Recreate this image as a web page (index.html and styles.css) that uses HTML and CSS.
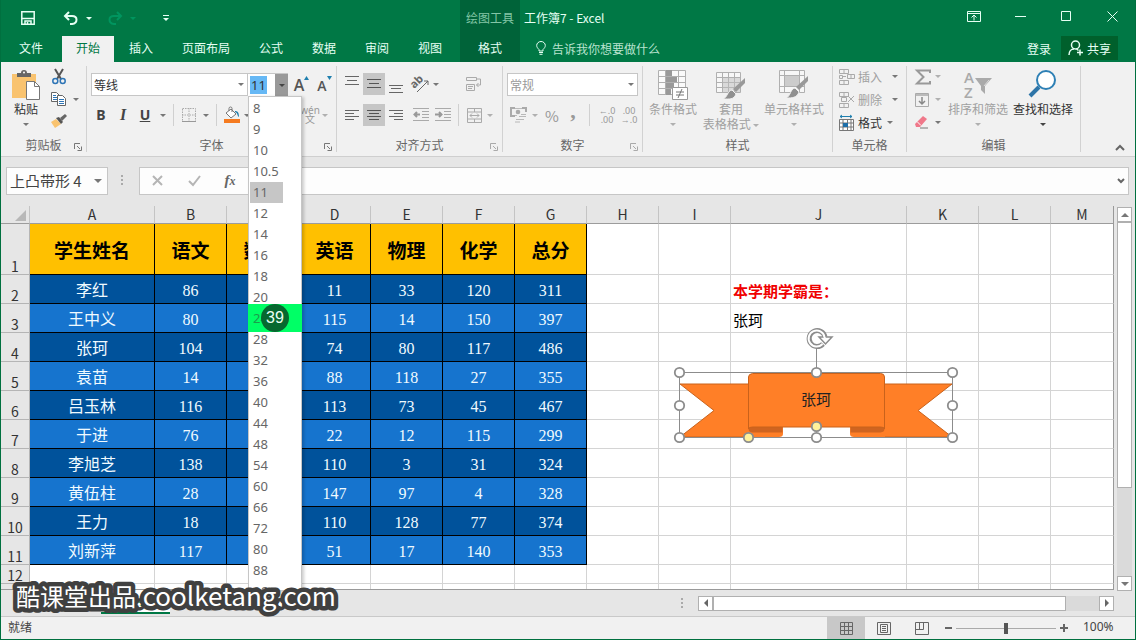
FILE: index.html
```html
<!DOCTYPE html>
<html lang="zh-CN">
<head>
<meta charset="utf-8">
<title>工作簿7 - Excel</title>
<link rel="stylesheet" href="styles.css">
</head>
<body>
<div class="app">
  <header class="titlebar">
    <div class="title-left">
      <div class="qat">
        <button class="qbtn" aria-label="保存"><svg width="14" height="14" viewBox="0 0 14 14"><path d="M.8.8h12.400v12.400H.8zM1 7.500h12M4 13v-3h6v3M6.500 11v2" fill="none" stroke="#e6fff4" stroke-width="1.500"/></svg></button>
        <button class="qbtn" aria-label="撤消"><svg width="16" height="14" viewBox="0 0 16 14"><path d="M6 1L2 5l4 4M2 5h7c6 0 6 7 0 8H7" fill="none" stroke="#e6fff4" stroke-width="2"/></svg></button>
        <button class="qcaret" aria-label="撤消选项"><i class="caret light"></i></button>
        <button class="qbtn" aria-label="恢复"><svg width="16" height="14" viewBox="0 0 16 14"><path d="M10 1l4 4-4 4M14 5H7c-6 0-6 7 0 8h2" fill="none" stroke="#00955f" stroke-width="2"/></svg></button>
        <button class="qcaret" aria-label="恢复选项"><i class="caret dim"></i></button>
        <button class="qbtn" aria-label="自定义快速访问工具栏"><svg width="6" height="7" viewBox="0 0 6 7"><path d="M0 .5h6" stroke="#e6fff4"/><path d="M0 3h6L3 6z" fill="#e6fff4"/></svg></button>
      </div>
      <nav class="tabs">
        <button class="tab file">文件</button><button class="tab active">开始</button><button class="tab">插入</button><button class="tab">页面布局</button><button class="tab">公式</button><button class="tab">数据</button><button class="tab">审阅</button><button class="tab">视图</button>
      </nav>
    </div>
    <div class="context">
      <span class="context-name">绘图工具</span>
      <button class="tab">格式</button>
    </div>
    <div class="title-right">
      <div class="caption">
        <span class="doc">工作簿7 - Excel</span>
        <button class="wbtn" aria-label="功能区显示选项"><svg width="14" height="11" viewBox="0 0 14 11"><path d="M.5.500h13v10H.5zM.5 2.500h13M7 9.500V4.500M4.500 6.500L7 4l2.500 2.500" fill="none" stroke="#e6fff4"/></svg></button>
        <button class="wbtn" aria-label="最小化"><svg width="11" height="11" viewBox="0 0 11 11"><path d="M0 5.500h11" stroke="#e6fff4"/></svg></button>
        <button class="wbtn" aria-label="最大化"><svg width="11" height="11" viewBox="0 0 11 11"><path d="M.5.500h9v9h-9z" fill="none" stroke="#e6fff4"/></svg></button>
        <button class="wbtn" aria-label="关闭"><svg width="11" height="11" viewBox="0 0 11 11"><path d="M.5.500l10 10M10.500.500l-10 10" stroke="#e6fff4"/></svg></button>
      </div>
      <div class="tellrow">
        <svg width="10" height="14" viewBox="0 0 10 14"><path d="M3 10V8.500C1.500 7 .7 6 .7 4.500a4.300 4 0 0 1 8.600 0C9.300 6 8.500 7 7 8.500V10zM3 11.500h4M3.500 13.300h3" fill="none" stroke="#e6fff4"/></svg>
        <a class="tell" href="#">告诉我你想要做什么</a>
        <a class="login" href="#">登录</a>
        <button class="share"><svg width="16" height="16" viewBox="0 0 16 16"><circle cx="7.500" cy="5" r="4" fill="none" stroke="#e6fff4" stroke-width="1.500"/><path d="M1 15c0-3.500 2-6 5-6M8.500 9l2 1.500M9 12.500h6M12 9.500v6" fill="none" stroke="#e6fff4" stroke-width="1.500"/></svg>共享</button>
      </div>
    </div>
  </header>

  <section class="ribbon">
    <div class="group clip">
      <div class="body">
        <button class="big"><svg width="28" height="30" viewBox="0 0 28 30"><path d="M0 4h24v24H0z" fill="#f9c36f"/><path d="M5 7V3h4a3 3 0 0 1 6 0h4v4z" fill="#666"/><circle cx="12" cy="2.500" r="1" fill="#fff"/><path d="M14.500 11.500h8l5 5v13h-13z" fill="#fff" stroke="#777"/><path d="M22.500 11.500v5h5" fill="none" stroke="#777"/></svg><span>粘贴</span><i class="caret"></i></button>
        <div class="stack">
          <button class="ib" aria-label="剪切"><svg width="14" height="16" viewBox="0 0 14 16"><path d="M3 0l6 10M11 0L5 10" stroke="#555" stroke-width="2"/><circle cx="3.300" cy="12" r="2.500" fill="none" stroke="#2e75b6" stroke-width="1.500"/><circle cx="10.700" cy="12" r="2.500" fill="none" stroke="#2e75b6" stroke-width="1.500"/></svg></button>
          <button class="ib wide" aria-label="复制"><svg width="16" height="14" viewBox="0 0 16 14"><path d="M.5.500h5l3 3v6h-8z" fill="#fff" stroke="#666"/><path d="M2 3.500h3M2 5.500h4M2 7.500h4" stroke="#2e75b6"/><path d="M6.500 3.500h5l3 3v7h-8z" fill="#fff" stroke="#666"/><path d="M8 7.500h5M8 9.500h5M8 11.500h5" stroke="#2e75b6"/></svg><i class="caret"></i></button>
          <button class="ib" aria-label="格式刷"><svg width="16" height="14" viewBox="0 0 16 14"><path d="M0 8l5-3 5 5-6 4z" fill="#f9c36f"/><path d="M5 4l3-1 4 5-2 2z" fill="#555"/><path d="M9 4l5-4 2 2-5 5z" fill="#666"/></svg></button>
        </div>
      </div>
      <div class="glabel">剪贴板<svg class="launch" width="8" height="8" viewBox="0 0 8 8"><path d="M.5 6V.500H6M3 3l3 3M7.500 3.500v4h-4" fill="none" stroke="#777"/></svg></div>
    </div>

    <div class="group font">
      <div class="body rows">
        <div class="row1">
          <select class="sel fname" aria-label="字体"><option>等线</option></select>
          <div class="combo">
            <input class="fsize" value="11" aria-label="字号">
            <button class="fdrop" aria-label="打开字号列表"><i class="caret dark"></i></button>
            <ul class="sizes">
              <li>8</li><li>9</li><li>10</li><li>10.5</li><li class="cur"><span>11</span></li><li>12</li><li>14</li><li>16</li><li>18</li><li>20</li><li class="hot">24<b class="count">39</b></li><li>28</li><li>32</li><li>36</li><li>40</li><li>44</li><li>48</li><li>54</li><li>60</li><li>66</li><li>72</li><li>80</li><li>88</li><li>96</li>
            </ul>
          </div>
          <button class="ib grow" aria-label="增大字号">A<svg width="5" height="4" viewBox="0 0 5 4"><path d="M0 4l2.500-4L5 4z" fill="#1f7fae"/></svg></button>
          <button class="ib grow small" aria-label="减小字号">A<svg width="5" height="4" viewBox="0 0 5 4"><path d="M0 0h5L2.500 4z" fill="#1f7fae"/></svg></button>
        </div>
        <div class="row2">
          <button class="ib bold">B</button><button class="ib ital">I</button><button class="ib und">U</button><button class="ib" aria-label="下划线选项"><i class="caret"></i></button>
          <span class="vsep"></span>
          <button class="ib" aria-label="边框"><svg width="14" height="14" viewBox="0 0 14 14"><path d="M.5.500h13v13H.5zM7 0v14M0 7h14" fill="none" stroke="#aaa" stroke-dasharray="1.500 1"/><path d="M0 13.500h14" stroke="#999"/></svg></button><button class="ib" aria-label="边框选项"><i class="caret"></i></button>
          <span class="vsep"></span>
          <button class="ib" aria-label="填充颜色"><svg width="18" height="16" viewBox="0 0 18 16"><path d="M3 6l5-4 5 5-5 4zM6 4V1.500a1.500 1.500 0 0 1 3 0V5" fill="#fff" stroke="#777"/><path d="M12 4c3 0 4 2 4 6-2-1-1-4-4-5z" fill="#1f7fae"/><path d="M1 12h16v4H1z" fill="#f57b20"/></svg></button>
          <button class="ib" aria-label="填充选项"><i class="caret"></i></button>
          <button class="ib wen"><span>wén</span><span>文</span></button><button class="ib wencaret" aria-label="拼音选项"><i class="caret pale"></i></button>
        </div>
      </div>
      <div class="glabel">字体<svg class="launch" width="8" height="8" viewBox="0 0 8 8"><path d="M.5 6V.500H6M3 3l3 3M7.500 3.500v4h-4" fill="none" stroke="#777"/></svg></div>
    </div>

    <div class="group align">
      <div class="body rows">
        <div class="arow">
          <button class="ib" aria-label="顶端对齐"><svg width="14" height="22" viewBox="0 0 14 22"><path d="M0 3.500h14M2 7.500h10M0 11.500h14" stroke="#666"/></svg></button>
          <button class="ib on" aria-label="垂直居中"><svg width="14" height="22" viewBox="0 0 14 22"><path d="M0 6.500h14M2 10.500h10M0 14.500h14" stroke="#555"/></svg></button>
          <button class="ib" aria-label="底端对齐"><svg width="14" height="22" viewBox="0 0 14 22"><path d="M0 12.500h14M2 15.500h10M0 19.500h14" stroke="#666"/></svg></button>
          <button class="ib" aria-label="方向"><svg width="20" height="22" viewBox="0 0 20 22"><text x="3" y="15" transform="rotate(-45 5 14)" class="ab">ab</text><path d="M7 19L18 8M14 8h4v4" fill="none" stroke="#666"/></svg></button>
          <button class="ib" aria-label="方向选项"><i class="caret"></i></button><span></span>
          <button class="ib" aria-label="自动换行"><svg width="16" height="16" viewBox="0 0 16 16"><path d="M.5 1.500h10v3H.5zM.5 8.500h8v6h-8zM2 10.500h5M2 12.500h4M10.500 3h4v6h-4M12.500 7l-2 2 2 2" fill="none" stroke="#aaa"/></svg></button>
        </div>
        <div class="arow">
          <button class="ib" aria-label="左对齐"><svg width="14" height="12" viewBox="0 0 14 12"><path d="M0 1.500h14M0 4.500h9M0 7.500h14M0 10.500h9" stroke="#666"/></svg></button>
          <button class="ib on" aria-label="居中"><svg width="14" height="12" viewBox="0 0 14 12"><path d="M0 1.500h14M2 4.500h10M0 7.500h14M2 10.500h10" stroke="#555"/></svg></button>
          <button class="ib" aria-label="右对齐"><svg width="14" height="12" viewBox="0 0 14 12"><path d="M0 1.500h14M5 4.500h9M0 7.500h14M5 10.500h9" stroke="#666"/></svg></button>
          <button class="ib" aria-label="减少缩进"><svg width="16" height="14" viewBox="0 0 16 14"><path d="M0 .5h16M9 3.500h7M9 6.500h7M9 9.500h7M0 12.500h16" stroke="#aaa"/><path d="M7 6.500H2M4 4L1.500 6.500 4 9" fill="none" stroke="#999" stroke-width="2"/></svg></button>
          <button class="ib" aria-label="增加缩进"><svg width="16" height="14" viewBox="0 0 16 14"><path d="M0 .5h16M9 3.500h7M9 6.500h7M9 9.500h7M0 12.500h16" stroke="#aaa"/><path d="M0 6.500h5M4 4l2.500 2.500L4 9" fill="none" stroke="#999" stroke-width="2"/></svg></button>
          <span class="vsep"></span>
          <button class="ib" aria-label="合并后居中"><svg width="15" height="15" viewBox="0 0 15 15"><path d="M.5.500h14v14H.5zM.5 4h14M.5 11h14M7.500 0v4M7.500 11v4M3 7.500h9M5 5.500l-2 2 2 2M10 5.500l2 2-2 2" fill="none" stroke="#aaa"/></svg></button>
          <button class="ib" aria-label="合并选项"><i class="caret pale"></i></button>
        </div>
      </div>
      <div class="glabel">对齐方式<svg class="launch" width="8" height="8" viewBox="0 0 8 8"><path d="M.5 6V.500H6M3 3l3 3M7.500 3.500v4h-4" fill="none" stroke="#aaa"/></svg></div>
    </div>

    <div class="group num">
      <div class="body rows">
        <select class="sel fmt" aria-label="数字格式"><option>常规</option></select>
        <div class="nrow">
          <button class="ib" aria-label="会计格式"><svg width="17" height="16" viewBox="0 0 17 16"><path d="M1 5V1h4M12 1h4v4M1 5v4h4" fill="none" stroke="#aaa" stroke-width="2"/><path d="M5 1.500h7M5 8.500h2" stroke="#bbb"/><circle cx="8" cy="5" r="2.300" fill="#aaa"/><path d="M9 9.500h7M6 12.500h8M5 15h5M11 7.500h5" stroke="#b8b8b8"/></svg></button>
          <button class="ib" aria-label="会计格式选项"><i class="caret pale"></i></button>
          <button class="ib pct">%</button><button class="ib comma">,</button>
          <span class="vsep"></span>
          <button class="ib dec" aria-label="增加小数位数">←.0<br>.00</button><button class="ib dec" aria-label="减少小数位数">.00<br>→.0</button>
        </div>
      </div>
      <div class="glabel">数字<svg class="launch" width="8" height="8" viewBox="0 0 8 8"><path d="M.5 6V.500H6M3 3l3 3M7.500 3.500v4h-4" fill="none" stroke="#aaa"/></svg></div>
    </div>

    <div class="group styles">
      <div class="body">
        <button class="big off"><svg width="30" height="30" viewBox="0 0 30 30"><path d="M.5.500h27v24H.5zM.5 6.500h27M.5 12.500h27M.5 18.500h27M7.500 0v25M20.500 0v25" fill="#fafafa" stroke="#b0b0b0"/><path d="M8 0h6v6H8zM8 7h11v5H8zM8 13h8v5H8zM8 19h5v6H8z" fill="#999"/><path d="M14.500 17.500h15v12h-15z" fill="#fff" stroke="#999"/><path d="M18 22h8M18 25h8M24 19l-4 9" stroke="#777"/></svg><span>条件格式</span><i class="caret pale"></i></button>
        <button class="big off"><svg width="30" height="30" viewBox="0 0 30 30"><path d="M.5 2.500h24v20H.5zM.5 7.500h24M.5 12.500h24M.5 17.500h24M6.500 2v20M12.500 2v20M18.500 2v20" fill="#f7f7f7" stroke="#b0b0b0"/><path d="M7 8h17v14H7z" fill="#bbb" opacity=".5"/><path d="M29 8v5l-9 9-3-3z" fill="#999"/><path d="M16 20l4 4c-2 6-7 5-13 5 5-2 4-8 9-9z" fill="#909090" stroke="#f1f1f1"/></svg><span>套用<br>表格格式 <i class="caret pale"></i></span></button>
        <button class="big off"><svg width="30" height="30" viewBox="0 0 30 30"><path d="M.5.500h25v22H.5zM.5 5.500h25M.5 16.500h25M5.500 0v22M20.500 0v22" fill="#f7f7f7" stroke="#b0b0b0"/><path d="M6 6h14v10H6z" fill="#ccc"/><path d="M29 6v5l-9 9-3-3z" fill="#999"/><path d="M16 18l4 4c-2 6-7 6-13 6 5-2 4-9 9-10z" fill="#909090" stroke="#f1f1f1"/></svg><span>单元格样式</span><i class="caret pale"></i></button>
      </div>
      <div class="glabel">样式</div>
    </div>

    <div class="group cells">
      <div class="body stack">
        <button class="cmd off"><svg width="16" height="16" viewBox="0 0 16 16"><path d="M.5.500h9v4h-9zM.5 11.500h9v4h-9zM5 0v5M5 11v5M.5 6.500h3v3h-3zM8.500 5.500h7v4h-7zM12 5.500v4M7 7.500H4" fill="none" stroke="#aaa"/></svg>插入<i class="caret"></i></button>
        <button class="cmd off"><svg width="16" height="16" viewBox="0 0 16 16"><path d="M.5.500h9v4h-9zM.5 11.500h9v4h-9zM5 0v5M5 11v5M2.500 5.500h5v4h-5zM9 4l6 6M15 4l-6 6" fill="none" stroke="#aaa"/></svg>删除<i class="caret"></i></button>
        <button class="cmd fmtcmd"><svg width="16" height="16" viewBox="0 0 16 16"><path d="M1 1.500h12M3 0L1 1.500 3 3M11 0l2 1.500L11 3" fill="none" stroke="#1f7fae"/><path d="M.5 4.500h14v11H.5zM.5 8h14M.5 12h14M4 4v12M8.500 4v12M12 4v12" fill="#fff" stroke="#777"/><path d="M4 8h5v4H4z" fill="#1f6fa8"/></svg>格式<i class="caret"></i></button>
      </div>
      <div class="glabel">单元格</div>
    </div>

    <div class="group edit">
      <div class="body">
        <div class="stack">
          <button class="ib wide" aria-label="自动求和"><svg width="16" height="16" viewBox="0 0 16 16"><path d="M15 4V1.500H2L8.500 8 2 14.500h13V12" fill="none" stroke="#999" stroke-width="2"/></svg><i class="caret pale"></i></button>
          <button class="ib wide" aria-label="填充"><svg width="14" height="14" viewBox="0 0 14 14"><path d="M.5.500h13v13H.5z" fill="none" stroke="#aaa"/><path d="M1 1h12v2H1z" fill="#bbb"/><path d="M7 4v7M4 8l3 3 3-3" fill="none" stroke="#888" stroke-width="1.500"/></svg><i class="caret pale"></i></button>
          <button class="ib wide" aria-label="清除"><svg width="14" height="13" viewBox="0 0 14 13"><path d="M0 8l8-8 4 3-7 8H1z" fill="#f0788a"/><path d="M2 5.500l4 4" stroke="#fff"/><path d="M5 12h8" stroke="#777"/></svg><i class="caret"></i></button>
        </div>
        <button class="big off"><svg width="30" height="30" viewBox="0 0 30 30"><text x="1" y="13" class="az">A</text><text x="1" y="28" class="az">Z</text><path d="M12 8h17l-7 8v8l-4-4v-4z" fill="#aaa"/><path d="M21 16l5-6" stroke="#ddd"/></svg><span>排序和筛选</span><i class="caret pale"></i></button>
        <button class="big"><svg width="30" height="30" viewBox="0 0 30 30"><path d="M11 17L2 26" stroke="#2e75a8" stroke-width="4"/><circle cx="18" cy="10" r="9" fill="#fff" stroke="#2e80b5" stroke-width="2"/></svg><span>查找和选择</span><i class="caret dark"></i></button>
      </div>
      <div class="glabel">编辑</div>
    </div>
    <button class="collapse" aria-label="折叠功能区"><svg width="10" height="6" viewBox="0 0 10 6"><path d="M1 5l4-4 4 4" fill="none" stroke="#666" stroke-width="2"/></svg></button>
  </section>

  <section class="fbar">
    <select class="sel namebox" aria-label="名称框"><option>上凸带形 4</option></select>
    <span class="dots"></span>
    <div class="formula">
      <button class="fb" aria-label="取消"><svg width="12" height="11" viewBox="0 0 12 11"><path d="M1 1l9 9M10 1l-9 9" stroke="#b5b5b5" stroke-width="2"/></svg></button>
      <button class="fb" aria-label="输入"><svg width="13" height="11" viewBox="0 0 13 11"><path d="M1 6l4 4 7-9" fill="none" stroke="#b5b5b5" stroke-width="2"/></svg></button>
      <button class="fb fx">f<small>x</small></button>
      <input class="finput" aria-label="编辑栏">
      <button class="fexp" aria-label="展开编辑栏"><svg width="8" height="6" viewBox="0 0 8 6"><path d="M1 1l3 3 3-3" fill="none" stroke="#666" stroke-width="2"/></svg></button>
    </div>
  </section>

  <main class="work">
    <div class="sheet">
      <table class="grid">
        <colgroup><col class="c-head"><col class="c-a"><col class="c"><col class="c"><col class="c"><col class="c"><col class="c"><col class="c"><col class="c"><col class="c"><col class="c-j"><col class="c"><col class="c"><col></colgroup>
        <thead><tr><th class="corner"><svg width="11" height="11" viewBox="0 0 11 11"><path d="M11 0v11H0z" fill="#b8b8b8"/></svg></th><th>A</th><th>B</th><th>C</th><th>D</th><th>E</th><th>F</th><th>G</th><th>H</th><th>I</th><th>J</th><th>K</th><th>L</th><th>M</th></tr></thead>
        <tbody>
          <tr class="top"><th>1</th><td>学生姓名</td><td>语文</td><td>数学</td><td>英语</td><td>物理</td><td>化学</td><td>总分</td><td></td><td></td><td></td><td></td><td></td><td></td></tr>
          <tr class="d"><th>2</th><td>李红</td><td>86</td><td></td><td>11</td><td>33</td><td>120</td><td>311</td><td></td><td></td><td class="note">本学期学霸是<span class="colon">：</span></td><td></td><td></td><td></td></tr>
          <tr class="d"><th>3</th><td>王中义</td><td>80</td><td></td><td>115</td><td>14</td><td>150</td><td>397</td><td></td><td></td><td class="who">张珂</td><td></td><td></td><td></td></tr>
          <tr class="d"><th>4</th><td>张珂</td><td>104</td><td></td><td>74</td><td>80</td><td>117</td><td>486</td><td></td><td></td><td></td><td></td><td></td><td></td></tr>
          <tr class="d"><th>5</th><td>袁苗</td><td>14</td><td></td><td>88</td><td>118</td><td>27</td><td>355</td><td></td><td></td><td></td><td></td><td></td><td></td></tr>
          <tr class="d"><th>6</th><td>吕玉林</td><td>116</td><td></td><td>113</td><td>73</td><td>45</td><td>467</td><td></td><td></td><td></td><td></td><td></td><td></td></tr>
          <tr class="d"><th>7</th><td>于进</td><td>76</td><td></td><td>22</td><td>12</td><td>115</td><td>299</td><td></td><td></td><td></td><td></td><td></td><td></td></tr>
          <tr class="d"><th>8</th><td>李旭芝</td><td>138</td><td></td><td>110</td><td>3</td><td>31</td><td>324</td><td></td><td></td><td></td><td></td><td></td><td></td></tr>
          <tr class="d"><th>9</th><td>黄伍柱</td><td>28</td><td></td><td>147</td><td>97</td><td>4</td><td>328</td><td></td><td></td><td></td><td></td><td></td><td></td></tr>
          <tr class="d"><th>10</th><td>王力</td><td>18</td><td></td><td>110</td><td>128</td><td>77</td><td>374</td><td></td><td></td><td></td><td></td><td></td><td></td></tr>
          <tr class="d"><th>11</th><td>刘新萍</td><td>117</td><td></td><td>51</td><td>17</td><td>140</td><td>353</td><td></td><td></td><td></td><td></td><td></td><td></td></tr>
          <tr class="e"><th>12</th><td></td><td></td><td></td><td></td><td></td><td></td><td></td><td></td><td></td><td></td><td></td><td></td><td></td></tr>
          <tr class="e"><th></th><td></td><td></td><td></td><td></td><td></td><td></td><td></td><td></td><td></td><td></td><td></td><td></td><td></td></tr>
        </tbody>
      </table>
      <svg class="shape" width="290" height="125" viewBox="670 322 290 125">
        <g fill="#ff7f27" stroke="#c9621b" stroke-width="1">
          <path d="M680 384h70v53h-70l34-26.500zM952 384h-70v53h70l-34-26.500z"/>
        </g>
        <path d="M783 427h67v10h-67z" fill="#fff"/>
        <path d="M748 427h35v7q0 3-4 3h-31zM885 427h-35v7q0 3 4 3h31z" fill="#ff7f27"/>
        <path d="M748.500 424v5q0 3 4 3.500h30v-5.500zM884.500 424v5q0 3-4 3.500h-30v-5.500z" fill="#cf6420"/>
        <path d="M748.500 429V377q0-3 4-3.500h128q4 0 4 3.500v52q0-2-4-2h-128q-4 0-4 2z" fill="#ff7f27" stroke="#c9621b"/>
        <path d="M679.500 372.500h273v65h-273zM816.500 348v24" fill="none" stroke="#8c8c8c"/>
        <text x="816" y="405" text-anchor="middle" class="stext">张珂</text>
        <g fill="#fff" stroke="#8c8c8c" stroke-width="1.800">
          <circle cx="679.500" cy="372.500" r="4.700"/><circle cx="816.500" cy="372.500" r="4.700"/><circle cx="952.500" cy="372.500" r="4.700"/>
          <circle cx="679.500" cy="405.500" r="4.700"/><circle cx="952.500" cy="405.500" r="4.700"/>
          <circle cx="679.500" cy="437.500" r="4.700"/><circle cx="816.500" cy="437.500" r="4.700"/><circle cx="952.500" cy="437.500" r="4.700"/>
          <circle cx="748.500" cy="437.500" r="4.700" fill="#fff29a"/><circle cx="816.500" cy="426.500" r="4.700" fill="#fff29a"/>
        </g>
        <path d="M823 344a8 8 0 1 1 2-7" fill="none" stroke="#8c8c8c" stroke-width="5"/>
        <path d="M819 337h13l-6.500 7z" fill="#fff" stroke="#8c8c8c" stroke-width="1.500"/>
        <path d="M822.500 344a8 8 0 1 1 2-7l1 3" fill="none" stroke="#fff" stroke-width="2"/>
      </svg>
    </div>
    <div class="vscroll"><button class="sb" aria-label="向上"><svg width="8" height="4" viewBox="0 0 8 4"><path d="M0 4l4-4 4 4z" fill="#777"/></svg></button><div class="vtrack"><div class="vthumb"></div></div><button class="sb" aria-label="向下"><svg width="8" height="4" viewBox="0 0 8 4"><path d="M0 0h8L4 4z" fill="#777"/></svg></button></div>
  </main>

  <div class="sheetbar">
    <button class="stab">Sheet1</button>
    <button class="addsheet" aria-label="新工作表"><svg width="15" height="15" viewBox="0 0 15 15"><path d="M7.500 1a6.500 6.500 0 1 0 .01 0zM7.500 4v7M4 7.500h7" fill="none" stroke="#777"/></svg></button>
    <span class="dots"></span>
    <div class="hscroll"><button class="sb" aria-label="向左"><svg width="4" height="8" viewBox="0 0 4 8"><path d="M4 0v8L0 4z" fill="#666"/></svg></button><div class="htrack"><div class="hthumb"></div></div><button class="sb" aria-label="向右"><svg width="4" height="8" viewBox="0 0 4 8"><path d="M0 0v8l4-4z" fill="#666"/></svg></button></div>
  </div>

  <footer class="status">
    <span class="ready">就绪</span>
    <button class="view on" aria-label="普通"><svg width="13" height="13" viewBox="0 0 13 13"><path d="M.5.500h12v12H.5zM4.500 0v13M8.500 0v13M0 4.500h13M0 8.500h13" fill="none" stroke="#666"/></svg></button>
    <button class="view" aria-label="页面布局"><svg width="14" height="13" viewBox="0 0 14 13"><path d="M.5.500h13v12H.5zM3.500 2.500h7v8h-7zM5 4.500h4M5 6.500h4M5 8.500h4" fill="none" stroke="#666"/></svg></button>
    <button class="view" aria-label="分页预览"><svg width="14" height="13" viewBox="0 0 14 13"><path d="M.5.500h13v12H.5zM.5 7.500h8v-7M4.500.500v7" fill="none" stroke="#666"/></svg></button>
    <button class="zb" aria-label="缩小"><svg width="7" height="8" viewBox="0 0 7 8"><path d="M0 4h7" stroke="#666" stroke-width="2"/></svg></button>
    <input class="zoom" type="range" min="10" max="190" value="100" aria-label="显示比例">
    <button class="zb" aria-label="放大"><svg width="8" height="8" viewBox="0 0 8 8"><path d="M0 4h8M4 0v8" stroke="#666" stroke-width="2"/></svg></button>
    <span class="pct100">100%</span>
  </footer>
  <svg class="mark" width="340" height="42" viewBox="0 0 340 42"><text x="15" y="28">酷课堂出品.<tspan class="site">coolketang.com</tspan></text></svg>
</div>
</body>
</html>
```
FILE: styles.css
```css
* { box-sizing: border-box; }
body { margin: 0; font: 12px/15px "Noto Sans CJK SC", "Open Sans", sans-serif; color: #444; }
button, select, input { font: inherit; color: inherit; border: 0; background: none; padding: 0; margin: 0; border-radius: 0; }
a { color: inherit; text-decoration: none; }
svg { display: block; flex: none; overflow: visible; }
.app { position: relative; height: 100vh; min-height: 640px; display: flex; flex-direction: column; background: #e6e6e6; border: 1px solid #00703f; border-top: 0; overflow: hidden; }

/* Title bar */
.titlebar { display: flex; height: 62px; flex: none; background: #007845; color: #e6fff4; margin: 0 -1px; }
.title-left { width: 460px; display: flex; flex-direction: column; }
.qat { height: 36px; display: flex; align-items: center; padding-left: 17px; }
.qbtn { width: 22px; height: 22px; display: grid; place-items: center; }
.qbtn:nth-child(2) { margin-left: 21px; }
.qcaret { width: 14px; height: 22px; display: grid; place-items: center; }
.qbtn:nth-child(4) { margin-left: 8px; }
.qbtn:nth-child(6) { margin-left: 15px; }
.tabs { display: flex; gap: 1px; height: 26px; padding-left: 5px; }
.tab { height: 26px; padding: 0 14px 3px; white-space: nowrap; }
.tab.file { margin-right: 4px; }
.tab.active { background: #f1f1f1; color: #007845; }
.context { width: 60px; background: #006339; display: flex; flex-direction: column; align-items: center; }
.context-name { height: 36px; line-height: 36px; color: #83c6a6; }
.title-right { flex: 1; display: flex; flex-direction: column; }
.caption { display: flex; align-items: center; height: 36px; padding: 0 1px 4px 4px; }
.doc { flex: 1; padding-top: 3px; }
.wbtn { width: 46px; height: 32px; display: grid; place-items: center; }
.tellrow { display: flex; align-items: center; height: 26px; padding: 0 18px 2px 16px; }
.tell { margin-left: 6px; flex: 1; color: #b9e3cf; }
.login { margin-right: 10px; }
.share { width: 57px; height: 24px; background: #00602c; display: flex; align-items: center; justify-content: center; gap: 3px; }

/* Shared bits */
.caret { display: inline-block; flex: none; width: 0; height: 0; border: 3px solid transparent; border-top-color: #777; border-bottom: 0; }
.caret.light { border-top-color: #e6fff4; }
.caret.dim { border-top-color: #00955f; }
.caret.pale { border-top-color: #b0b0b0; }
.caret.dark { border-top-color: #444; }
.vsep { width: 1px; height: 22px; background: #d0d0d0; justify-self: center; }
.sel { appearance: none; border: 1px solid #c6c6c6; background: #fff url("data:image/svg+xml,%3Csvg xmlns='http://www.w3.org/2000/svg' width='6' height='3'%3E%3Cpath d='M0 0h6L3 3z' fill='%23777'/%3E%3C/svg%3E") no-repeat right 3px center; }
.dots { width: 2px; height: 11px; background: repeating-linear-gradient(#aaa 0 2px, transparent 2px 4px); }

/* Ribbon */
.ribbon { display: flex; height: 95px; flex: none; background: #f1f1f1; border-bottom: 1px solid #cfcfcf; position: relative; z-index: 2; }
.group { margin: 4px 0; border-right: 1px solid #d2d2d2; display: flex; flex-direction: column; flex: none; }
.body { flex: 1; display: flex; }
.rows { flex-direction: column; gap: 9px; padding-top: 7px; }
.glabel { height: 17px; line-height: 19px; text-align: center; position: relative; color: #666; }
.launch { position: absolute; right: 4px; top: 8px; }
.stack { display: flex; flex-direction: column; }
.ib { height: 22px; display: flex; align-items: center; justify-content: center; }
.ib.on { background: #c6c6c6; }
.big { display: flex; flex-direction: column; align-items: center; padding-top: 4px; white-space: nowrap; line-height: 15px; }
.big svg { margin-bottom: 1px; }
.big > .caret { margin-top: 7px; }
.big .caret { vertical-align: middle; }
.off { color: #a0a0a0; }
.clip { width: 86px; }
.clip .big { width: 50px; color: #333; }
.clip .stack { width: 32px; }
.clip .ib { width: 16px; }
.clip .ib.wide { width: 28px; justify-content: space-between; }
.font { width: 250px; }
.row1 { display: flex; height: 23px; padding-left: 4px; }
.rows .row1 + .row2 { margin-top: -1px; }
.fname { width: 157px; height: 23px; padding-left: 2px; color: #333; }
.combo { position: relative; width: 40px; height: 23px; display: flex; background: #fff; border-top: 1px solid #c6c6c6; margin-right: 2px; }
.fsize { width: 17px; height: 18px; margin: 2px 0 0 2px; padding-left: 1px; background: #66b8f5; font-family: "Noto Sans", sans-serif; font-size: 13px; color: #333; }
.fdrop { width: 13px; height: 22px; margin-left: auto; background: #999; display: grid; place-items: center; }
.row1 .grow { width: 23px; align-items: flex-start; padding-top: 4px; font: 600 16px/16px "Open Sans", sans-serif; color: #555; }
.row1 .small { font-size: 14px; line-height: 18px; }
.grow svg { margin-top: -1px; }
.row2 { display: grid; align-items: center; grid-template-columns: 22px 22px 22px 13px 9px 21px 13px 9px 22px 8px 84px 14px; padding-left: 3px; }
.bold, .ital, .und { font: bold 14px/18px "Noto Sans", sans-serif; color: #444; }
.ital { font-family: "Liberation Serif", serif; font-style: italic; font-size: 16px; }
.und { text-decoration: underline; }
.row2 .wen { flex-direction: column; align-items: center; width: 24px; justify-self: end; margin-right: 13px; font: 10px/9px "Noto Sans", "Noto Sans CJK SC", sans-serif; color: #999; }
.row2 .wencaret { justify-self: start; margin-left: -13px; }
.align { width: 166px; }
.arow { display: grid; align-items: center; grid-template-columns: 22px 22px 22px 28px 16px 14px 18px 14px; padding-left: 4px; }
.arow:first-child { grid-template-columns: 22px 22px 22px 26px 6px 26px 18px; }
.ab { font: bold 11px "Open Sans", sans-serif; fill: #666; }
.num { width: 140px; }
.fmt { width: 131px; height: 23px; margin-left: 4px; padding-left: 2px; color: #999; }
.nrow { display: grid; align-items: center; margin-top: -1px; grid-template-columns: 22px 12px 22px 20px 13px 22px 22px; padding-left: 4px; color: #999; }
.pct { font-size: 15px; }
.comma { font: bold 22px/12px "Liberation Serif", serif; padding-bottom: 8px; }
.dec { font: 9px/9px "Noto Sans", sans-serif; }
.styles { width: 190px; }
.styles .big { width: 60px; }
.styles .big:nth-child(2) { width: 56px; }
.styles .big:nth-child(3) { width: 70px; }
.cells { width: 74px; }
.cmd { height: 23px; display: flex; align-items: center; padding: 0 8px 2px 6px; gap: 3px; }
.cmd .caret { margin-left: auto; }
.cmd.fmtcmd { color: #333; padding-right: 13px; }
.edit { width: 174px; }
.edit .stack { width: 38px; }
.edit .ib.wide { padding: 0 4px 2px 8px; height: 23px; width: 38px; justify-content: space-between; }
.edit .big { width: 66px; }
.edit .big:last-child { color: #333; width: 64px; }
.az { font: 600 15px "Open Sans", sans-serif; fill: #aaa; }
.collapse { margin: auto 10px 5px auto; }

/* Open font size list */
.sizes { position: absolute; top: 22px; left: 0; width: 54px; height: 494px; margin: 0; padding: 1px 0 0; list-style: none; background: #fff; border: 1px solid #c6c6c6; border-bottom: 0; box-shadow: 2px 1px 3px rgba(0, 0, 0, .2); font: 13px/21px "Noto Sans", sans-serif; color: #666; }
.sizes li { height: 21px; padding-left: 4px; position: relative; }
.sizes .cur { padding-left: 1px; }
.cur span { display: block; width: 33px; padding-left: 3px; background: #c6c6c6; }
.sizes .hot { z-index: 1; color: #1c9c4c; }
.hot::before { content: ""; position: absolute; z-index: -1; left: -1px; top: -4px; width: 54px; height: 28px; background: #00ff66; }
.count { position: absolute; left: 12px; top: -4px; width: 28px; height: 28px; border-radius: 50%; background: #06682f; color: #e9fff2; font: 16px/28px "Liberation Sans", sans-serif; text-align: center; }

/* Formula bar */
.fbar { display: flex; align-items: center; height: 49px; flex: none; padding: 0 6px 2px 5px; }
.namebox { width: 102px; height: 28px; font-size: 15px; padding-left: 3px; background-color: #fdfdfd; background-size: 8px 4px; background-position: right 5px center; }
.fbar .dots { margin: 0 16px 0 13px; }
.formula { flex: 1; height: 28px; display: flex; align-items: center; background: #fdfdfd; border: 1px solid #c6c6c6; }
.fb { width: 36px; display: grid; place-items: center; }
.fb.fx { display: block; font: italic bold 15px/20px "Liberation Serif", serif; color: #666; }
.fx small { font-size: 12px; }
.finput { flex: 1; min-width: 0; outline: 0; }
.fexp { padding: 0 3px; }

/* Worksheet */
.work { flex: 1; min-height: 0; display: flex; }
.sheet { flex: 1; min-width: 0; position: relative; overflow: hidden; border-bottom: 1px solid #999; }
.grid { width: 100%; table-layout: fixed; border-collapse: separate; border-spacing: 0; background: #fff; }
.c-head { width: 29px; }
.c-a { width: 125px; }
.c { width: 72px; }
.c-j { width: 176px; }
.grid th, .grid td { padding: 0; border-right: 1px solid #d4d4d4; border-bottom: 1px solid #d4d4d4; white-space: nowrap; }
.grid th { font-weight: 400; font-size: 14px; line-height: 16px; color: #333; background: #e6e6e6; border-color: #b5b5b5; }
.grid thead th { height: 18px; line-height: 17px; border-right-color: #c4c4c4; border-bottom-color: #9c9c9c; }
.grid .corner svg { margin: 2px 0 0 14px; }
.grid tbody th { vertical-align: bottom; }
.grid tr > :last-child { border-right-color: #999; }
.top td { height: 51px; }
.grid .d td { height: 29px; line-height: 24px; padding-top: 3px; }
.e td, .e th { height: 19px; }
.top td:nth-child(-n+8), .d td:nth-child(-n+8) { border-color: #000; text-align: center; }
.grid .top td:nth-child(-n+8) { background: #ffc000; color: #000; font-size: 19px; font-weight: 700; line-height: 28px; padding-top: 2px; }
.grid .d td:nth-child(-n+8) { background: #00529b; color: #f0faff; font: 16px/24px "Liberation Serif", "Noto Sans CJK SC", serif; }
.grid .d:nth-child(odd) td:nth-child(-n+8) { background: #1674ce; }
.grid .note, .grid .who { font-size: 15px; padding-left: 2px; color: #000; }
.grid .note { color: #f00000; font-weight: 700; }
.colon { font-family: "Noto Sans CJK TC", sans-serif; }
.shape { position: absolute; left: 669px; top: 116px; }
.stext { font-size: 15px; fill: #222; }
.vscroll { width: 15px; margin: 1px 3px -1px 3px; display: flex; flex-direction: column; position: relative; z-index: 1; }
.sb { width: 15px; height: 15px; flex: none; background: #fff; border: 1px solid #b0b0b0; display: grid; place-items: center; }
.vtrack { flex: 1; background: #dadada; }
.vthumb { height: 75%; background: #fff; border: 1px solid #b0b0b0; }

/* Sheet tabs and status */
.sheetbar { height: 27px; flex: none; display: flex; align-items: center; padding: 0 21px 0 100px; border-bottom: 1px solid #c9c9c9; }
.stab { align-self: flex-start; width: 69px; height: 24px; background: #fff; border-bottom: 2px solid #007845; color: #007845; font: bold 13px/20px "Noto Sans", sans-serif; }
.addsheet { margin-left: 34px; }
.sheetbar .dots { margin-left: auto; margin-right: 15px; }
.hscroll { width: 416px; display: flex; }
.htrack { flex: 1; background: #dadada; }
.hthumb { width: 353px; height: 15px; background: #fff; border: 1px solid #b0b0b0; }
.status { height: 22px; flex: none; display: flex; align-items: center; background: #f1f1f1; padding: 0 20px 0 7px; }
.ready { margin-right: auto; padding-bottom: 3px; }
.view { width: 38px; height: 22px; display: grid; place-items: center; }
.view.on { background: #c8c8c8; }
.zb { width: 15px; height: 15px; display: grid; place-items: center; }
.zoom { appearance: none; width: 100px; height: 14px; background: linear-gradient(#aaa, #aaa) no-repeat center / 100% 1px; }
.zoom::-webkit-slider-thumb { appearance: none; width: 4px; height: 11px; background: #555; }
.pct100 { width: 32px; margin-left: 12px; padding-bottom: 3px; font: 12px/20px "Noto Sans", sans-serif; }
.mark { position: absolute; left: 0; bottom: 19px; z-index: 5; }
.mark text { font-size: 24px; fill: #fff; stroke: #404040; stroke-width: 9px; stroke-linejoin: round; paint-order: stroke; }
.mark .site { font-size: 26px; }
```
